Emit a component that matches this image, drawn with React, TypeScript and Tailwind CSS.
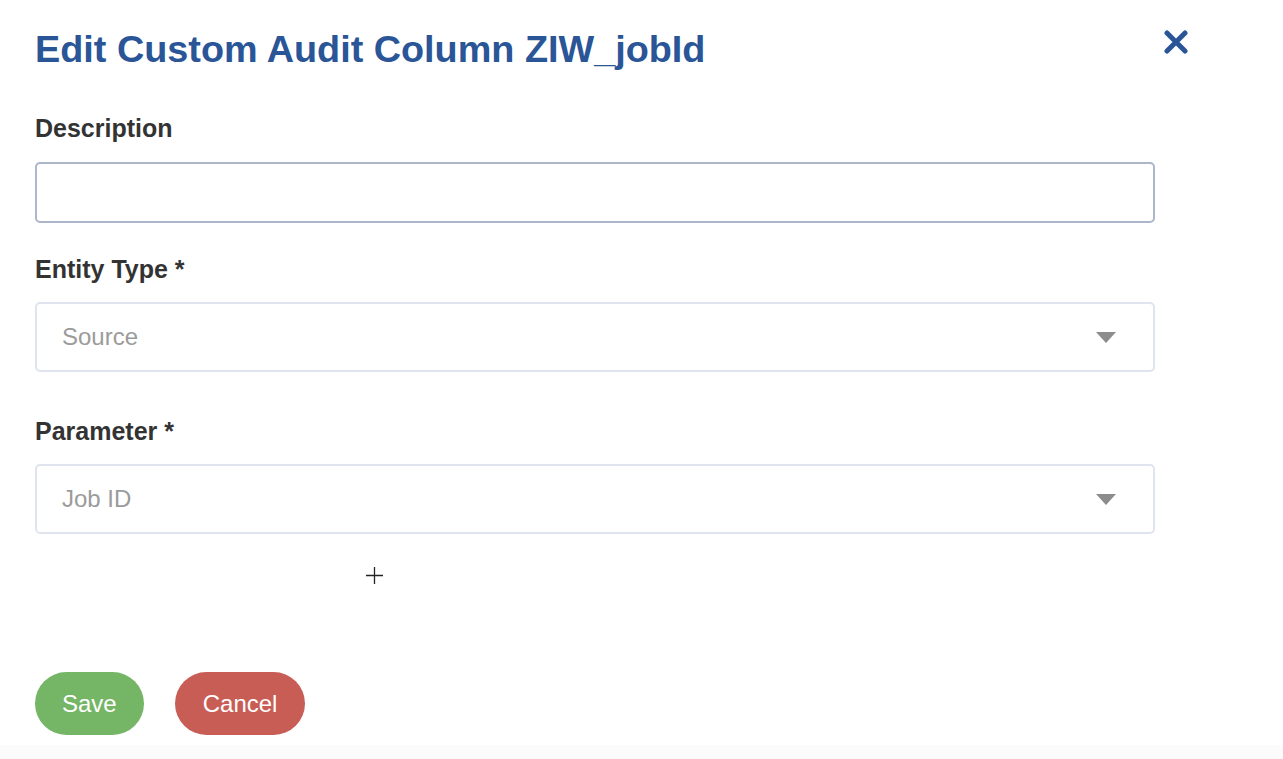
const FONT = { fontFamily: '"Liberation Sans", Arial, Helvetica, sans-serif' };

function Caret() {
  return (
    <svg width="20" height="11" viewBox="0 0 20 11" className="shrink-0">
      <path d="M0 0 H20 L10 11 Z" fill="#8c8c8c" />
    </svg>
  );
}

function SelectBox({ value }: { value: string }) {
  return (
    <div className="flex h-[70px] w-full items-center justify-between rounded-[5px] border-2 border-[#e0e4ee] bg-white pl-[25px] pr-[37px]">
      <span className="text-[24px] text-[#9b9b9b]">{value}</span>
      <Caret />
    </div>
  );
}

export default function App() {
  return (
    <div className="relative flex min-h-[759px] w-full flex-col bg-white" style={FONT}>
      <div className="flex-1 pl-[35px] pt-[27px]">
        <div className="flex w-[1153px] items-start justify-between">
          <h1 className="text-[37.8px] font-bold leading-[44px] text-[#2a5597]">
            Edit Custom Audit Column ZIW_jobId
          </h1>
          <button className="mt-[3px] text-[#2a5597]" aria-label="Close">
            <svg width="24" height="24" viewBox="0 0 24 24">
              <path d="M3 3 L21 21 M21 3 L3 21" stroke="currentColor" strokeWidth="5" strokeLinecap="round" />
            </svg>
          </button>
        </div>

        <div className="w-[1120px]">
          <label className="mt-[43px] block text-[25px] font-bold leading-[28px] text-[#333]">Description</label>
          <input
            className="mt-[20px] block h-[61px] w-full rounded-[5px] border-2 border-[#abb6c9] bg-white px-[24px] text-[24px] outline-none"
            style={FONT}
          />

          <label className="mt-[32px] block text-[25px] font-bold leading-[28px] text-[#333]">Entity Type *</label>
          <div className="mt-[19px]">
            <SelectBox value="Source" />
          </div>

          <label className="mt-[45px] block text-[25px] font-bold leading-[28px] text-[#333]">Parameter *</label>
          <div className="mt-[19px]">
            <SelectBox value="Job ID" />
          </div>

          <div className="mt-[138px] flex gap-[31px]">
            <button className="h-[63px] rounded-full bg-[#74b566] px-[27px] text-[24px] text-white">Save</button>
            <button className="h-[63px] rounded-full bg-[#c85d55] px-[28px] text-[24px] text-white">Cancel</button>
          </div>
        </div>
      </div>
      <div className="h-[14px] bg-[#fbfbfb]" />

      {/* mouse cursor crosshair in the capture */}
      <svg className="absolute left-[366px] top-[567px]" width="17" height="17" viewBox="0 0 17 17">
        <path d="M8.5 0 V17 M0 8.5 H17" stroke="#222" strokeWidth="1.3" />
      </svg>
    </div>
  );
}
